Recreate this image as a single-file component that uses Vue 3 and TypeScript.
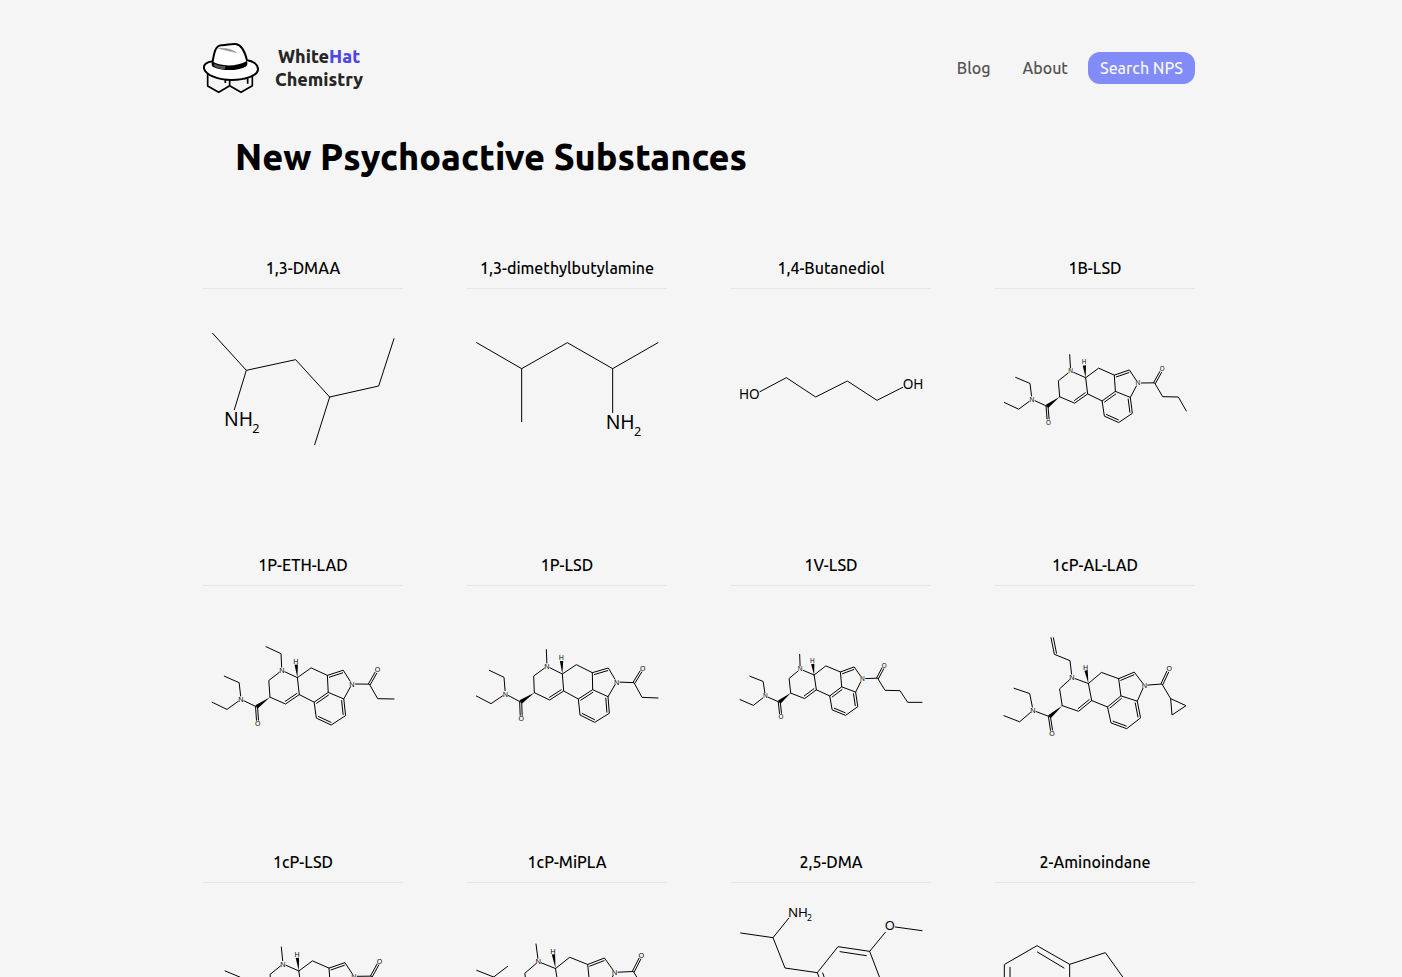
<script setup lang="ts">
type Point = [number, number]

interface Label {
  text: string
  x: number
  y: number
  size: number
  anchor: 'start' | 'middle'
}

interface Drawing {
  dx: number
  dy: number
  lines: string[]
  wedges: string[]
  labels: Label[]
}

interface Substance {
  name: string
  drawing: Drawing
}

interface LysergamideOptions {
  dy: number
  dx?: number
  anchors: [string, string]
  at: [Point, Point]
  size: number
  // chain attached to the ring nitrogen
  amine: Point[]
  amineDouble?: boolean
  // chain attached to the acyl carbon
  acyl: Point[]
  isopropyl?: boolean
}

// Atom positions of the shared ergoline skeleton
const skeleton: Record<string, Point> = {
  e1: [66, 120], e2: [110, 141], na: [114, 191], e3: [27, 197], e4: [71, 220],
  ca: [160, 215], oa: [162, 265], c8: [201, 187], c7: [199, 137], n6: [239, 108],
  c5: [285, 131], h: [282, 82], c4: [327, 103], c3: [375, 127], c2: [423, 113],
  ni: [448, 155], c7a: [422, 199], c3a: [376, 178], c10: [289, 182], c9: [247, 209],
  c11: [333, 206], c12: [338, 254], c13: [382, 276], c14: [426, 249],
  cy: [500, 157], oy: [526, 115],
}

function path(...points: Point[]): string {
  return 'M' + points.map(([x, y]) => `${x.toFixed(1)} ${y.toFixed(1)}`).join('L')
}

// Moves the start of a bond away from its atom label
function trim(from: Point, to: Point, gap: number): Point {
  const length = Math.hypot(to[0] - from[0], to[1] - from[1])
  return [from[0] + ((to[0] - from[0]) * gap) / length, from[1] + ((to[1] - from[1]) * gap) / length]
}

// Second line of a double bond, on the given side of the first
function parallel(a: Point, b: Point, offset: number, inset: number): string {
  const length = Math.hypot(b[0] - a[0], b[1] - a[1])
  const u: Point = [(b[0] - a[0]) / length, (b[1] - a[1]) / length]
  const n: Point = [-u[1] * offset, u[0] * offset]
  return path(
    [a[0] + u[0] * inset + n[0], a[1] + u[1] * inset + n[1]],
    [b[0] - u[0] * inset + n[0], b[1] - u[1] * inset + n[1]],
  )
}

function wedge(tip: Point, base: Point, half: number): string {
  const length = Math.hypot(base[0] - tip[0], base[1] - tip[1])
  const n: Point = [(-(base[1] - tip[1]) / length) * half, ((base[0] - tip[0]) / length) * half]
  return path(tip, [base[0] + n[0], base[1] + n[1]], [base[0] - n[0], base[1] - n[1]]) + 'Z'
}

function lysergamide(o: LysergamideOptions): Drawing {
  const s0 = skeleton[o.anchors[0]]
  const s1 = skeleton[o.anchors[1]]
  const [t0, t1] = o.at
  const sx = s1[0] - s0[0]
  const sy = s1[1] - s0[1]
  const tx = t1[0] - t0[0]
  const ty = t1[1] - t0[1]
  const d = sx * sx + sy * sy
  const re = (tx * sx + ty * sy) / d
  const im = (ty * sx - tx * sy) / d
  const p: Record<string, Point> = {}
  for (const key of Object.keys(skeleton)) {
    const x = skeleton[key][0] - s0[0]
    const y = skeleton[key][1] - s0[1]
    p[key] = [t0[0] + x * re - y * im, t0[1] + x * im + y * re]
  }
  const gap = 10
  const lines = [
    path(trim(p.na, p.ca, gap), p.ca),
    path(p.c8, p.c7, trim(p.n6, p.c7, gap)),
    path(trim(p.n6, p.c5, gap), p.c5, p.c10, p.c9, p.c8),
    path(p.c5, p.c4, p.c3, p.c2, trim(p.ni, p.c2, gap)),
    path(p.c3, p.c3a, p.c11, p.c12, p.c13, p.c14, p.c7a, p.c3a),
    path(p.c10, p.c11),
    path(trim(p.ni, p.c7a, gap), p.c7a),
    path(trim(p.ni, p.cy, gap), p.cy, ...o.acyl),
    path(trim(p.n6, o.amine[0], gap), ...o.amine),
    parallel(p.ca, trim(p.oa, p.ca, gap), 3, 0),
    parallel(p.ca, trim(p.oa, p.ca, gap), -3, 0),
    parallel(p.cy, trim(p.oy, p.cy, gap), 3, 0),
    parallel(p.cy, trim(p.oy, p.cy, gap), -3, 0),
    parallel(p.c10, p.c9, 7, 4),
    parallel(p.c3, p.c2, 7, 4),
    parallel(p.c3a, p.c11, -7, 4),
    parallel(p.c12, p.c13, -7, 4),
    parallel(p.c14, p.c7a, -7, 4),
  ]
  if (o.amineDouble) {
    const n = o.amine.length
    lines.push(parallel(o.amine[n - 2], o.amine[n - 1], 7, 2))
  }
  if (o.isopropyl) {
    lines.push('M28 360L79 380L121 348', path(trim(p.na, [79, 380], gap), [79, 380]), path(trim(p.na, p.e4, gap), p.e4))
  } else {
    lines.push(path(p.e1, p.e2, trim(p.na, p.e2, gap)), path(p.e3, p.e4, trim(p.na, p.e4, gap)))
  }
  const labels = [['N', p.na], ['O', p.oa], ['N', p.n6], ['H', p.h], ['N', p.ni], ['O', p.oy]] as [string, Point][]
  return {
    dx: (o.dx ?? 0) + 1,
    dy: o.dy + 1,
    lines,
    wedges: [wedge(p.c8, p.ca, 6), wedge(p.c5, trim(p.h, p.c5, gap), 5)],
    labels: labels.map(([text, at]) => ({
      text, x: at[0], y: at[1] + o.size * 0.36, size: o.size, anchor: 'middle' as const,
    })),
  }
}

function simple(dx: number, dy: number, lines: string[], labels: [string, number, number, number][]): Drawing {
  return {
    dx: dx + 1, dy: dy + 1, lines, wedges: [],
    labels: labels.map(([text, x, y, size]) => ({ text, x, y, size, anchor: 'start' as const })),
  }
}

const substances: Substance[] = [
  {
    name: '1,3-DMAA',
    drawing: simple(0, -117,
      ['M28 249L129 360L277 328L379 440L526 407L572 265', 'M129 360L93 478', 'M379 440L334 583'],
      [['NH', 62, 526, 58], ['2', 147, 548, 38]]),
  },
  {
    name: '1,3-dimethylbutylamine',
    drawing: simple(-792, -117,
      ['M820 277L955 355L1092 277L1228 355L1364 277', 'M955 355V514', 'M1228 355V487'],
      [['NH', 1207, 535, 58], ['2', 1292, 557, 38]]),
  },
  {
    name: '1,4-Butanediol',
    drawing: simple(0, -117,
      ['M86 424L165 382L253 440L348 392L437 450L514 411'],
      [['HO', 23, 446, 41], ['OH', 514, 417, 41]]),
  },
  {
    name: '1B-LSD',
    drawing: lysergamide({
      dy: 153, anchors: ['na', 'ni'], at: [[110, 177], [428, 128]], size: 19,
      amine: [[223, 43]], acyl: [[502, 169], [549, 170], [573, 212]],
    }),
  },
  {
    name: '1P-ETH-LAD',
    drawing: lysergamide({
      dy: 132, anchors: ['na', 'ni'], at: [[113, 207], [446, 161]], size: 21,
      amine: [[233, 70], [188, 49]], acyl: [[523, 205], [572, 206]],
    }),
  },
  {
    name: '1P-LSD',
    drawing: lysergamide({
      dy: 132, anchors: ['na', 'ni'], at: [[114, 191], [448, 155]], size: 21,
      amine: [[237, 58]], acyl: [[524, 201], [572, 203]],
    }),
  },
  {
    name: '1V-LSD',
    drawing: lysergamide({
      dy: 132, anchors: ['na', 'ni'], at: [[102, 197], [393, 145]], size: 19,
      amine: [[205, 72]], acyl: [[461, 180], [506, 181], [529, 216], [572, 216]],
    }),
  },
  {
    name: '1cP-AL-LAD',
    drawing: lysergamide({
      dy: 132, anchors: ['na', 'ni'], at: [[113, 240], [447, 165]], size: 21,
      amine: [[224, 91], [177, 72], [167, 22]], amineDouble: true,
      acyl: [[526, 205], [572, 226], [530, 254], [526, 205]],
    }),
  },
  {
    name: '1cP-LSD',
    drawing: lysergamide({
      dy: -99, anchors: ['n6', 'ni'], at: [[239, 341], [452, 378]], size: 21,
      amine: [[234, 290]], acyl: [[529, 422], [573, 446], [530, 470], [529, 422]],
    }),
  },
  {
    name: '1cP-MiPLA',
    drawing: lysergamide({
      dy: -99, anchors: ['n6', 'ni'], at: [[213, 334], [442, 366]], size: 22,
      amine: [[206, 281]], acyl: [[528, 412], [573, 436], [530, 462], [528, 412]],
      isopropyl: true,
    }),
  },
  {
    name: '2,5-DMA',
    drawing: simple(0, -99,
      [
        'M28 248L125 262L161 353L258 367L320 289L415 303L450 395L388 473L292 459L258 367',
        'M125 262L172 204', 'M415 303L462 246', 'M492 230L572 241',
        'M326 304L405 316', 'M274 368L301 442', 'M434 397L384 458',
        'M292 459L250 512', 'M220 530L140 518',
      ],
      [['NH', 170, 199, 40], ['2', 227, 212, 26], ['O', 460, 240, 39], ['O', 220, 545, 39]]),
  },
  {
    name: '2-Aminoindane',
    drawing: simple(-792, -99,
      [
        'M820 342L917 286L1015 342V455L917 512L820 455Z',
        'M1015 342L1122 307L1188 399L1122 490L1015 455',
        'M918 305L998 353', 'M836 351V446', 'M998 445L918 492', 'M1188 399H1280',
      ],
      [['NH', 1282, 415, 39], ['2', 1337, 427, 26]]),
  },
]
</script>

<template>
  <div class="page">
    <header class="header">
      <a class="brand" href="#">
        <svg class="logo" viewBox="24 22 168 156" aria-hidden="true">
          <g fill="none" stroke="#000" stroke-width="5" stroke-linejoin="round">
            <path d="M38 116V154L71 173L104 153L138 173L172 153V116M104 153V134" />
            <path d="M91 134V145M158 132V147" />
          </g>
          <path
            d="M53 80C34 82 25 90 27 101C31 121 70 136 110 136C154 136 188 122 189 104C190 90 174 79 156 77C151 56 140 30 122 28C108 26 94 33 79 32C60 34 58 54 53 80Z"
            fill="#fff" stroke="#000" stroke-width="6" stroke-linejoin="round"
          />
          <path d="M51 80C76 97 128 96 155 79C159 87 158 92 151 97C126 110 78 109 53 96C49 91 49 85 51 80Z" fill="#000" />
          <path d="M58 87C68 92 79 94 91 94L90 104C77 103 65 100 57 95Z" fill="#555" />
          <path d="M71 41C92 40 112 44 124 54C108 50 91 47 71 41Z" fill="#999" stroke="#999" stroke-width="2" />
        </svg>
        <span class="wordmark">White<span class="accent">Hat</span><br>Chemistry</span>
      </a>
      <nav class="nav">
        <a class="nav-link" href="#">Blog</a>
        <a class="nav-link" href="#">About</a>
        <a class="nav-link search" href="#">Search NPS</a>
      </nav>
    </header>
    <main>
      <h1 class="title">New Psychoactive Substances</h1>
      <div class="grid">
        <a v-for="item in substances" :key="item.name" class="card" href="#">
          <h2 class="name">{{ item.name }}</h2>
          <svg class="molecule" viewBox="0 0 600 600" role="img" :aria-label="item.name">
            <g :transform="`translate(${item.drawing.dx} ${item.drawing.dy})`">
              <path v-for="(line, i) in item.drawing.lines" :key="i" class="bond" :d="line" />
              <path v-for="(shape, i) in item.drawing.wedges" :key="'w' + i" :d="shape" />
              <text
                v-for="(label, i) in item.drawing.labels" :key="'t' + i"
                :x="label.x" :y="label.y" :font-size="label.size" :text-anchor="label.anchor"
              >{{ label.text }}</text>
            </g>
          </svg>
        </a>
      </div>
    </main>
  </div>
</template>

<style>
body {
  margin: 0;
  background: #f5f5f5;
}
</style>

<style scoped>
.page {
  box-sizing: border-box;
  max-width: 996px;
  margin: 0 auto;
  padding: 40px 4px 64px 0;
  font-family: Ubuntu, "Noto Sans", sans-serif;
  font-size: 16px;
  line-height: 24px;
  font-weight: 500;
  color: #000;
}

a {
  color: inherit;
  text-decoration: none;
}

.header {
  display: flex;
  align-items: center;
  justify-content: space-between;
}

.brand {
  display: flex;
  align-items: center;
  gap: 16px;
}

.logo {
  width: 56px;
  height: 52px;
}

.wordmark {
  font-size: 18px;
  line-height: 23px;
  font-weight: 800;
  text-align: center;
  color: #262626;
  padding: 5px 0;
}

.accent {
  color: #4f46e5;
}

.nav {
  display: flex;
  align-items: center;
  gap: 8px;
}

.nav-link {
  padding: 4px 12px;
  color: #525252;
}

.search {
  border-radius: 12px;
  background: #818cf8;
  color: #f5f5f5;
}

.title {
  margin: 41px 0 79px 32px;
  font-size: 36px;
  line-height: 40px;
  font-weight: 800;
}

.grid {
  display: grid;
  grid-template-columns: repeat(4, 1fr);
  gap: 64px;
}

.card {
  display: block;
}

.name {
  margin: 0;
  padding-bottom: 8px;
  border-bottom: 1px solid #e5e5e5;
  font-size: 16px;
  line-height: 24px;
  font-weight: 500;
  text-align: center;
  white-space: nowrap;
}

.molecule {
  display: block;
  width: 100%;
  aspect-ratio: 1;
  font-family: "Noto Sans", sans-serif;
  font-weight: 400;
}

.bond {
  fill: none;
  stroke: #000;
  stroke-width: 3;
  stroke-linecap: round;
  stroke-linejoin: round;
}
</style>
